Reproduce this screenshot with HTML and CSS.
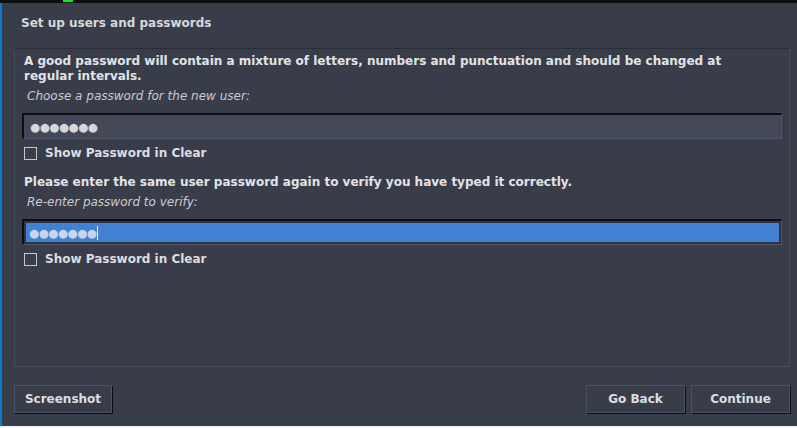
FILE: index.html
```html
<!DOCTYPE html>
<html>
<head>
<meta charset="utf-8">
<link rel="stylesheet" href="styles.css">
</head>
<body>
<div class="desk-top"><span class="desk-green"></span></div>
<div class="window">
  <div class="title">Set up users and passwords</div>
  <div class="panel">
    <p class="lead">A good password will contain a mixture of letters, numbers and punctuation and should be changed at regular intervals.</p>
    <p class="hint">Choose a password for the new user:</p>
    <div class="entry"><span class="dots">●●●●●●●</span></div>
    <label class="check"><span class="box"></span>Show Password in Clear</label>
    <p class="lead second">Please enter the same user password again to verify you have typed it correctly.</p>
    <p class="hint">Re-enter password to verify:</p>
    <div class="entry focused"><span class="dots sel">●●●●●●●</span><span class="caret"></span></div>
    <label class="check"><span class="box"></span>Show Password in Clear</label>
  </div>
  <div class="footer">
    <button class="btn">Screenshot</button>
    <div class="spacer"></div>
    <button class="btn wide">Go Back</button>
    <button class="btn wide">Continue</button>
  </div>
</div>
<div class="desk-bottom"></div>
</body>
</html>
```
FILE: styles.css
```css
html, body {
  margin: 0;
  padding: 0;
  background: #393d4a;
  overflow: hidden;
}
body {
  width: 797px;
  height: 428px;
  font-family: "DejaVu Sans", sans-serif;
  font-size: 12px;
  color: #dcdde0;
}
.desk-top {
  height: 3px;
  background: #0c0f10;
  position: relative;
}
.desk-green {
  position: absolute;
  left: 63px;
  top: 0;
  width: 10px;
  height: 2px;
  background: #1ee61e;
}
.window {
  height: 423px;
  border-left: 2px solid #0b78c8;
  box-sizing: border-box;
  display: flex;
  flex-direction: column;
}
.title {
  font-weight: bold;
  color: #d6d8dc;
  padding: 12px 0 0 19px;
  height: 45px;
  box-sizing: border-box;
  line-height: 16px;
  flex: none;
}
.panel {
  margin: 0 7px 0 12px;
  height: 319px;
  flex: none;
  box-sizing: border-box;
  border: 1px solid #464c5c;
  border-top-color: #2a2d36;
  padding: 5px 7px 0 7px;
  display: flex;
  flex-direction: column;
}
.lead {
  margin: 0 50px 0 2px;
  font-weight: bold;
  line-height: 15px;
  color: #e2e3e6;
}
.lead.second {
  margin-top: 14px;
}
.hint {
  margin: 5px 0 0 5px;
  font-style: italic;
  color: #c9cbd0;
  line-height: 15px;
}
.entry {
  margin-top: 9px;
  height: 26px;
  flex: none;
  box-sizing: border-box;
  background: #444856;
  border-top: 2px solid #0e0f12;
  border-left: 2px solid #0e0f12;
  border-right: 1px solid #4d5668;
  border-bottom: 1px solid #4d5668;
  display: flex;
  align-items: center;
  padding-left: 6px;
}
.entry.focused {
  background: #4281d2;
  box-shadow: inset 0 0 0 2px #2f3340;
  padding-left: 4px;
}
.dots {
  font-size: 11.5px;
  letter-spacing: -0.4px;
  color: #d5d7dc;
  line-height: 14px;
}
.dots.sel {
  color: #c9d6ea;
  padding: 0 1px;
}
.caret {
  width: 1px;
  height: 14px;
  background: #e8eef8;
}
.check {
  margin-top: 7px;
  display: flex;
  align-items: center;
  font-weight: bold;
  color: #dcdde0;
  line-height: 15px;
}
.box {
  width: 11px;
  height: 11px;
  border: 1px solid #c4c6cc;
  margin: 0 8px 0 2px;
  flex: none;
}
.footer {
  display: flex;
  align-items: flex-start;
  padding: 18px 7px 0 12px;
  gap: 6px;
}
.spacer {
  flex: 1;
}
.btn {
  width: 98px;
  height: 28px;
  box-sizing: border-box;
  background: #393d4a;
  border: 1px solid #4a5366;
  box-shadow: 1px 1px 0 #0c0d10;
  font-family: "DejaVu Sans", sans-serif;
  font-size: 12px;
  font-weight: bold;
  color: #dcdde0;
  padding: 0;
}
.btn.wide {
  width: 99px;
}
.desk-bottom {
  height: 2px;
  background: #f4f4f4;
}
```
